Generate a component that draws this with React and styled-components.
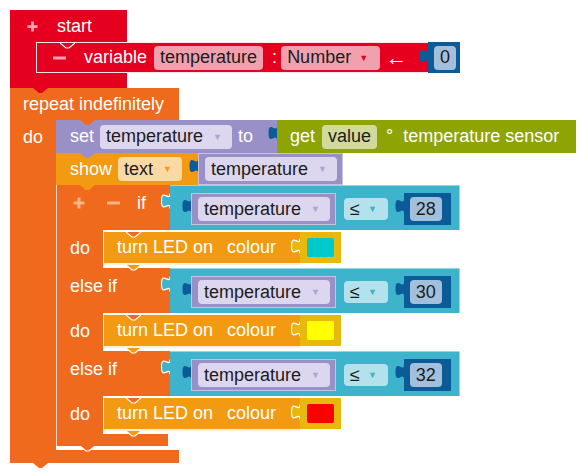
import React from 'react';
import styled, { createGlobalStyle } from 'styled-components';

const C = {
  red: '#E5001F',
  redField: '#F2A0AE',
  pink: '#F7A3B2',
  orange: '#EF6A1C',
  peachIcon: '#F9B489',
  purple: '#9A90C8',
  lav: '#DCD6EF',
  lavArrow: '#ADA5D2',
  green: '#8EA405',
  khaki: '#D2DA9B',
  amber: '#F29B12',
  peach: '#FBD9A4',
  cyan: '#3DB4CB',
  ice: '#B3E2EC',
  navy: '#0B5B99',
  steel: '#A2C0DC',
  gold: '#E8B90C',
};

const GlobalStyle = createGlobalStyle`
  html, body { margin: 0; background: #fff; }
  body { font-family: "Liberation Sans", Arial, sans-serif; }
`;

const Canvas = styled.div`
  width: 583px;
  height: 476px;
  box-sizing: border-box;
  padding: 10px 0 0 10px;
  overflow: hidden;
  font-size: 18px;
  color: #fff;
  display: flex;
  flex-direction: column;
  align-items: flex-start;
`;

const Column = styled.div`
  position: relative;
  display: flex;
  flex-direction: column;
  align-items: flex-start;
  padding-bottom: ${p => p.$pb || 0}px;
`;

const Row = styled.div`
  display: flex;
  align-items: ${p => p.$align || 'stretch'};
  height: ${p => (p.$h ? `${p.$h}px` : 'auto')};
  padding-top: ${p => p.$pt || 0}px;
  box-sizing: border-box;
`;

const Bar = styled.div`
  position: relative;
  box-sizing: border-box;
  flex: none;
  display: flex;
  align-items: center;
  width: ${p => p.$w}px;
  height: ${p => (p.$h ? `${p.$h}px` : 'auto')};
  padding-left: ${p => p.$pl || 0}px;
  background: ${p => p.$bg};
`;

const Arm = styled(Bar)`
  align-items: flex-start;
`;

const ArmHead = styled.div`
  display: flex;
  align-items: center;
  height: 36px;
  white-space: nowrap;
`;

const Spine = styled.div`
  flex: none;
  box-sizing: border-box;
  width: ${p => p.$w}px;
  padding-left: ${p => p.$pl}px;
  background: ${p => p.$bg};
  line-height: ${p => p.$lh}px;
  white-space: nowrap;
`;

const Block = styled.div`
  position: relative;
  box-sizing: border-box;
  flex: none;
  display: flex;
  align-items: center;
  width: ${p => p.$w}px;
  height: ${p => p.$h}px;
  padding-left: ${p => p.$pl || 0}px;
  background: ${p => p.$bg};
  border: ${p => (p.$edge ? '1px solid rgba(255,255,255,0.45)' : 'none')};
`;

const VarBlock = styled(Block)`
  border: 1px solid rgba(255, 255, 255, 0.9);
  border-right: none;
`;

const Compare = styled.div`
  position: relative;
  box-sizing: border-box;
  flex: none;
  display: flex;
  align-items: center;
  width: 290px;
  height: 45px;
  padding: 3px 0 0 11px;
  background: ${C.cyan};
  box-shadow: inset 0 1px 0 rgba(255, 255, 255, 0.45), inset -1px 0 0 rgba(255, 255, 255, 0.45);
`;

const LedBlock = styled(Block)`
  box-shadow: inset 1px -2px 0 rgba(255, 255, 255, 0.85);
  padding-bottom: 2px;
`;

const IfBlock = styled(Column)`
  &::after {
    content: '';
    position: absolute;
    left: 0;
    top: 0;
    bottom: 0;
    width: 1px;
    background: rgba(255, 255, 255, 0.75);
  }
`;

const Plug = styled.div`
  display: flex;
  align-items: flex-start;
  flex: none;
  margin-left: ${p => p.$ml || 0}px;
`;

const Field = styled.span`
  display: inline-flex;
  align-items: center;
  flex: none;
  height: ${p => p.$h || 24}px;
  box-sizing: border-box;
  padding: 0 ${p => p.$pr ?? 6}px 0 6px;
  margin-left: ${p => p.$ml || 0}px;
  border-radius: 4px;
  background: ${p => p.$bg};
  color: #1c1c1c;
  white-space: nowrap;
`;

const Arrow = styled.span`
  color: ${p => p.$c};
  font-size: 9px;
  margin-left: ${p => p.$ml ?? 10}px;
`;

const Label = styled.span`
  flex: none;
  margin-left: ${p => p.$ml || 0}px;
  white-space: nowrap;
`;

const Pointer = styled(Label)`
  font-size: 21px;
  line-height: 1;
`;

const Swatch = styled.span`
  width: 27px;
  height: 19px;
  border-radius: 2px;
  margin-left: 7px;
  background: ${p => p.$c};
`;

const TabShape = styled.svg`
  flex: none;
  align-self: flex-start;
  margin-top: ${p => p.$mt}px;
  margin-left: ${p => p.$ml};
`;

const Tab = ({ fill, stroke, mt = 5, ml = '0px' }) => (
  <TabShape $mt={mt} $ml={ml} width="10" height="17" viewBox="-0.5 -0.5 10 17">
    <path
      d="M9.5,0 C9.5,9 1,-6 1,7.5 S9.5,6 9.5,15"
      fill={fill}
      stroke={stroke || 'none'}
      strokeWidth="1.2"
    />
  </TabShape>
);

const NotchShape = styled.svg`
  position: absolute;
  left: ${p => p.$x}px;
  top: ${p => (p.$bottom ? '100%' : '0')};
  z-index: 1;
`;

const Notch = ({ x, fill, stroke, bottom }) => (
  <NotchShape $x={x} $bottom={bottom} width="15" height="6" viewBox="0 0 15 6">
    <path d="M0,0 L6,5 L9,5 L15,0" fill={fill} stroke={stroke || 'none'} strokeWidth="1.2" />
  </NotchShape>
);

const IconBox = styled.svg`
  flex: none;
  margin-left: ${p => p.$ml || 0}px;
`;

const Plus = ({ c, size = 12, ml }) => (
  <IconBox $ml={ml} width={size} height={size} viewBox="0 0 12 12">
    <path d="M6 0.5 V11.5 M0.5 6 H11.5" stroke={c} strokeWidth="3" />
  </IconBox>
);

const Minus = ({ c, ml }) => (
  <IconBox $ml={ml} width="13" height="12" viewBox="0 0 13 12">
    <path d="M0 6 H13" stroke={c} strokeWidth="3" />
  </IconBox>
);

const TempBlock = () => (
  <Plug>
    <Tab fill={C.navy} />
    <Block $bg={C.purple} $w={145} $h={32} $pl={6} $edge>
      <Field $bg={C.lav} $pr={10}>
        temperature<Arrow $c={C.lavArrow}>▼</Arrow>
      </Field>
    </Block>
  </Plug>
);

const NumberBlock = ({ value }) => (
  <Plug $ml={6}>
    <Tab fill={C.navy} />
    <Block $bg={C.navy} $w={47} $h={32} $pl={6}>
      <Field $bg={C.steel} $pr={6}>{value}</Field>
    </Block>
  </Plug>
);

const CompareRow = ({ label, value, top }) => (
  <Row $h={45}>
    <Arm $bg={C.orange} $w={114} $h={45} $pl={top ? 17 : 14}>
      {top && <Notch x={24} fill={C.amber} />}
      <ArmHead>
        {top && <Plus c={C.peachIcon} />}
        {top && <Minus c={C.peachIcon} ml={22} />}
        <Label $ml={top ? 17 : 0}>{label}</Label>
      </ArmHead>
      <Tab fill={C.cyan} stroke="#fff" mt={8} ml="auto" />
    </Arm>
    <Compare>
      <TempBlock />
      <Field $bg={C.ice} $h={22} $ml={8} $pr={11}>
        ≤<Arrow $c={C.cyan} $ml={8}>▼</Arrow>
      </Field>
      <NumberBlock value={value} />
    </Compare>
  </Row>
);

const LedRow = ({ colour }) => (
  <Row $h={38}>
    <Spine $bg={C.orange} $w={47} $pl={14} $lh={36}>do</Spine>
    <Row $pt={2} $align="flex-start">
      <LedBlock $bg={C.amber} $w={197} $h={33} $pl={14}>
        <Notch x={23} fill={C.orange} stroke="#fff" />
        <Notch x={23} fill={C.amber} stroke="#fff" bottom />
        <Label>turn LED on</Label>
        <Label $ml={14}>colour</Label>
        <Tab fill={C.gold} stroke="#fff" mt={6} ml="auto" />
      </LedBlock>
      <Block $bg={C.gold} $w={41} $h={31}>
        <Swatch $c={colour} />
      </Block>
    </Row>
  </Row>
);

export default function App() {
  return (
    <Canvas>
      <GlobalStyle />

      <Column>
        <Bar $bg={C.red} $w={117} $h={32} $pl={17}>
          <Plus c={C.pink} size={11} />
          <Label $ml={19}>start</Label>
        </Bar>
        <Row>
          <Spine $bg={C.red} $w={26} $pl={0} $lh={31} />
          <VarBlock $bg={C.red} $w={392} $h={31} $pl={16}>
            <Notch x={23} fill={C.red} stroke="#fff" />
            <Minus c={C.pink} />
            <Label $ml={18}>variable</Label>
            <Field $bg={C.redField} $ml={7}>temperature</Field>
            <Label $ml={9}>:</Label>
            <Field $bg={C.redField} $ml={4} $pr={12}>
              Number<Arrow $c={C.red} $ml={8}>▼</Arrow>
            </Field>
            <Pointer $ml={6}>←</Pointer>
            <Tab fill={C.navy} ml="auto" />
          </VarBlock>
          <Block $bg={C.navy} $w={32} $h={31} $pl={6}>
            <Field $bg={C.steel}>0</Field>
          </Block>
        </Row>
        <Bar $bg={C.red} $w={117} $h={15} />
      </Column>

      <Column>
        <Bar $bg={C.orange} $w={169} $h={32} $pl={13}>
          <Notch x={23} fill={C.red} />
          <Label>repeat indefinitely</Label>
        </Bar>
        <Row>
          <Spine $bg={C.orange} $w={46} $pl={13} $lh={34}>do</Spine>
          <Column $pb={4}>
            <Row>
              <Block $bg={C.purple} $w={221} $h={33} $pl={14}>
                <Notch x={24} fill={C.orange} />
                <Label>set</Label>
                <Field $bg={C.lav} $ml={6} $pr={10}>
                  temperature<Arrow $c={C.lavArrow}>▼</Arrow>
                </Field>
                <Label $ml={6}>to</Label>
                <Tab fill={C.navy} ml="auto" />
              </Block>
              <Block $bg={C.green} $w={299} $h={33} $pl={13}>
                <Label>get</Label>
                <Field $bg={C.khaki} $ml={7}>value</Field>
                <Label $ml={9}>°</Label>
                <Label $ml={10}>temperature sensor</Label>
              </Block>
            </Row>

            <Row>
              <Block $bg={C.amber} $w={142} $h={32} $pl={14}>
                <Notch x={24} fill={C.purple} />
                <Label>show</Label>
                <Field $bg={C.peach} $ml={6} $pr={10}>
                  text<Arrow $c={C.amber}>▼</Arrow>
                </Field>
                <Tab fill={C.navy} ml="auto" />
              </Block>
              <Block $bg={C.purple} $w={145} $h={32} $pl={6} $edge>
                <Field $bg={C.lav} $pr={10}>
                  temperature<Arrow $c={C.lavArrow}>▼</Arrow>
                </Field>
              </Block>
            </Row>

            <IfBlock>
              <CompareRow top label="if" value="28" />
              <LedRow colour="#00C9C9" />
              <CompareRow label="else if" value="30" />
              <LedRow colour="#FFFF00" />
              <CompareRow label="else if" value="32" />
              <LedRow colour="#FF0000" />
              <Bar $bg={C.orange} $w={112} $h={12}>
                <Notch x={24} fill={C.orange} stroke="#fff" bottom />
              </Bar>
            </IfBlock>
          </Column>
        </Row>
        <Bar $bg={C.orange} $w={169} $h={13}>
          <Notch x={23} fill={C.orange} bottom />
        </Bar>
      </Column>
    </Canvas>
  );
}
